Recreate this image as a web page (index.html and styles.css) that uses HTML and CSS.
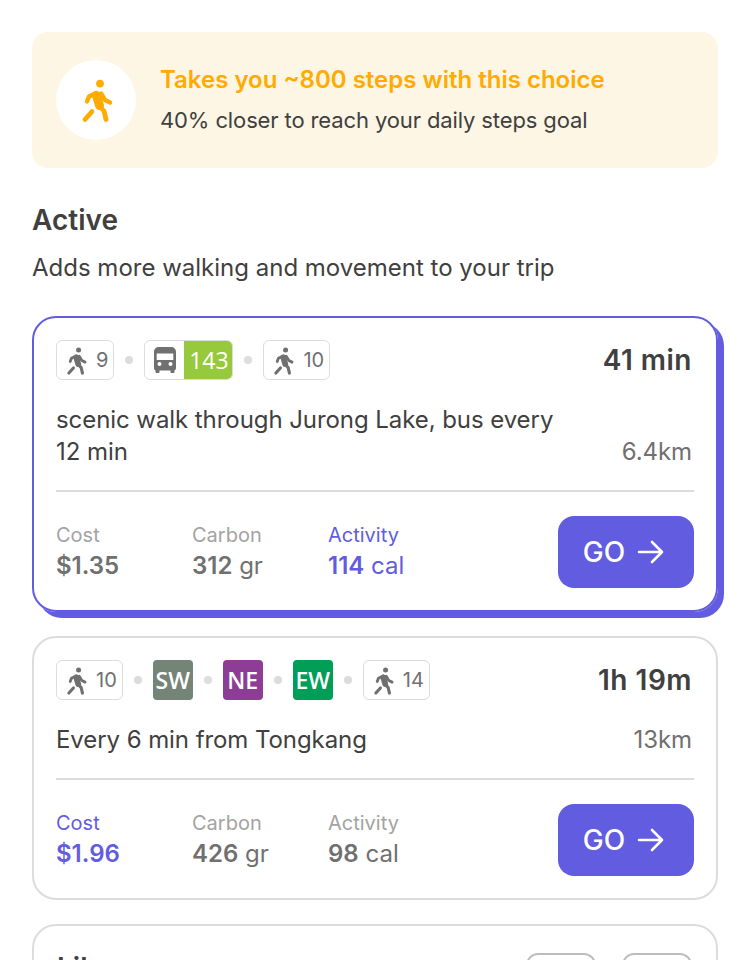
FILE: index.html
```html
<!DOCTYPE html>
<html lang="en">
<head>
    <meta charset="UTF-8">
    <meta name="viewport" content="width=device-width, initial-scale=1.0">
    <title>Active routes</title>
    <link rel="stylesheet" href="styles.css">
</head>
<body>
    <svg class="defs" width="0" height="0">
        <symbol id="walk" viewBox="0 0 34 48">
            <circle cx="21" cy="7.600" r="3.900" fill="currentColor"/>
            <g fill="none" stroke="currentColor" stroke-linecap="round" stroke-linejoin="round">
                <path d="M17.500 19.500 20.500 29.500" stroke-width="9"/>
                <path d="M17 17 10 20.500 8 25.500" stroke-width="4.400"/>
                <path d="M22 17.500 26 24 31 26.500" stroke-width="4.400"/>
                <path d="M20.500 30 25 35 27 43.500" stroke-width="4.800"/>
                <path d="M13 35.500 6 43.500" stroke-width="4.800"/>
            </g>
        </symbol>
        <symbol id="bus" viewBox="0 0 22 26">
            <path d="M5 0h12c3 0 5 2 5 5v16c0 1-.5 2-1.500 2.300V25c0 .6-.4 1-1 1h-2c-.6 0-1-.4-1-1v-1.500H5.500V25c0 .6-.4 1-1 1h-2c-.6 0-1-.4-1-1v-1.700C.5 23 0 22 0 21V5c0-3 2-5 5-5z" fill="currentColor"/>
            <rect x="2.700" y="6.500" width="16.600" height="6.500" fill="#fff"/>
            <circle cx="5.500" cy="17" r="2" fill="#fff"/>
            <circle cx="16.500" cy="17" r="2" fill="#fff"/>
        </symbol>
        <symbol id="arrow" viewBox="0 0 28 28">
            <path d="M2 14h23M15 4l10 10-10 10" fill="none" stroke="currentColor" stroke-width="2.600" stroke-linecap="round" stroke-linejoin="round"/>
        </symbol>
    </svg>

    <div class="container">
        <div class="banner">
            <div class="banner-icon"><svg class="icon-lg"><use href="#walk"/></svg></div>
            <div>
                <div class="banner-title">Takes you ~800 steps with this choice</div>
                <div class="banner-sub">40% closer to reach your daily steps goal</div>
            </div>
        </div>

        <h2>Active</h2>
        <p class="lead">Adds more walking and movement to your trip</p>

        <div class="card card-selected">
            <div class="card-top">
                <div class="legs">
                    <span class="chip"><svg class="icon"><use href="#walk"/></svg>9</span>
                    <i class="dot"></i>
                    <span class="chip chip-bus"><span class="bus-part"><svg class="icon-bus"><use href="#bus"/></svg></span><span class="bus-no">143</span></span>
                    <i class="dot"></i>
                    <span class="chip"><svg class="icon"><use href="#walk"/></svg>10</span>
                </div>
                <div class="duration">41 min</div>
            </div>
            <div class="desc">
                <div class="desc-text">scenic walk through Jurong Lake, bus every 12 min</div>
                <div class="distance">6.4km</div>
            </div>
            <div class="card-bottom">
                <div class="stat">
                    <div class="stat-label">Cost</div>
                    <div class="stat-value"><b>$1.35</b></div>
                </div>
                <div class="stat">
                    <div class="stat-label">Carbon</div>
                    <div class="stat-value"><b>312</b> gr</div>
                </div>
                <div class="stat stat-on">
                    <div class="stat-label">Activity</div>
                    <div class="stat-value"><b>114</b> cal</div>
                </div>
                <button class="go">GO<svg class="icon-arrow"><use href="#arrow"/></svg></button>
            </div>
        </div>

        <div class="card">
            <div class="card-top">
                <div class="legs">
                    <span class="chip"><svg class="icon"><use href="#walk"/></svg>10</span>
                    <i class="dot"></i>
                    <span class="line line-sw">SW</span>
                    <i class="dot"></i>
                    <span class="line line-ne">NE</span>
                    <i class="dot"></i>
                    <span class="line line-ew">EW</span>
                    <i class="dot"></i>
                    <span class="chip"><svg class="icon"><use href="#walk"/></svg>14</span>
                </div>
                <div class="duration">1h 19m</div>
            </div>
            <div class="desc">
                <div class="desc-text">Every 6 min from Tongkang</div>
                <div class="distance">13km</div>
            </div>
            <div class="card-bottom">
                <div class="stat stat-on">
                    <div class="stat-label">Cost</div>
                    <div class="stat-value"><b>$1.96</b></div>
                </div>
                <div class="stat">
                    <div class="stat-label">Carbon</div>
                    <div class="stat-value"><b>426</b> gr</div>
                </div>
                <div class="stat">
                    <div class="stat-label">Activity</div>
                    <div class="stat-value"><b>98</b> cal</div>
                </div>
                <button class="go">GO<svg class="icon-arrow"><use href="#arrow"/></svg></button>
            </div>
        </div>

        <div class="card card-cut">
            <div class="cut-title">Lik</div>
            <div class="cut-pills"><span></span><span></span></div>
        </div>
    </div>
</body>
</html>
```

FILE: styles.css
```css
html, body {
    height: 960px;
    overflow: hidden;
}
body {
    font-family: Inter, sans-serif;
    margin: 0;
    padding: 0;
    color: #404040;
    background: #fff;
}
.defs {
    position: absolute;
}
.container {
    padding: 32px 32px 0;
}
.banner {
    display: flex;
    align-items: center;
    gap: 24px;
    height: 136px;
    padding: 0 24px;
    box-sizing: border-box;
    border-radius: 16px;
    background-color: #fef6e4;
}
.banner-icon {
    display: flex;
    align-items: center;
    justify-content: center;
    width: 80px;
    height: 80px;
    border-radius: 50%;
    background: #fff;
    color: #ffab00;
}
.icon-lg {
    width: 34px;
    height: 48px;
}
.banner-title {
    font-size: 24px;
    line-height: 32px;
    font-weight: 600;
    color: #ffab00;
}
.banner-sub {
    font-size: 22px;
    line-height: 32px;
    letter-spacing: -0.12px;
    margin-top: 8px;
}
h2 {
    margin: 36px 0 0;
    font-size: 28px;
    line-height: 32px;
    font-weight: 600;
}
.lead {
    margin: 16px 0 0;
    font-size: 24px;
    line-height: 32px;
}
.card {
    box-sizing: border-box;
    width: 686px;
    margin-top: 24px;
    padding: 22px 24px 22px 22px;
    border: 2px solid #dcdcdc;
    border-radius: 24px;
}
.card-selected {
    margin-top: 32px;
    border-color: #625ce0;
    box-shadow: 6px 6px 0 #625ce0;
}
.card-top {
    display: flex;
    justify-content: space-between;
    align-items: center;
}
.legs {
    display: flex;
    align-items: center;
    gap: 11px;
}
.dot {
    width: 8px;
    height: 8px;
    border-radius: 50%;
    background: #dcdcdc;
}
.chip {
    display: flex;
    align-items: center;
    box-sizing: border-box;
    height: 40px;
    padding: 0 5px 0 8px;
    border: 1px solid #dcdcdc;
    border-radius: 6px;
    font-size: 20px;
    color: #707070;
}
.icon {
    width: 22px;
    height: 31px;
    margin-right: 9px;
    color: #707070;
}
.chip-bus {
    padding: 0;
    overflow: hidden;
}
.bus-part {
    display: flex;
    align-items: center;
    justify-content: center;
    width: 39px;
    color: #707070;
}
.icon-bus {
    width: 22px;
    height: 26px;
}
.bus-no, .line {
    display: flex;
    align-items: center;
    justify-content: center;
    height: 40px;
    color: #fff;
    font-family: "Open Sans", sans-serif;
    font-size: 23px;
    font-weight: 600;
}
.bus-no {
    width: 49px;
    margin: -1px -1px -1px 0;
    background: #97c93c;
    font-weight: 500;
}
.line {
    width: 40px;
    border-radius: 4px;
}
.line-sw {
    background: #748477;
}
.line-ne {
    background: #8e3d97;
}
.line-ew {
    background: #009e57;
}
.duration {
    font-size: 28px;
    font-weight: 600;
    letter-spacing: 0.5px;
}
.desc {
    display: flex;
    justify-content: space-between;
    align-items: flex-end;
    margin-top: 24px;
    font-size: 24px;
    line-height: 32px;
    letter-spacing: -0.07px;
}
.desc-text {
    width: 520px;
}
.distance {
    color: #707070;
}
.card-bottom {
    display: flex;
    align-items: center;
    margin-top: 22px;
    margin-right: -2px;
    padding-top: 24px;
    border-top: 2px solid #dcdcdc;
}
.stat {
    width: 136px;
    padding-bottom: 1px;
}
.stat-label {
    font-size: 20px;
    line-height: 29px;
    color: #a3a3a3;
}
.stat-value {
    font-size: 24px;
    line-height: 32px;
    color: #707070;
}
.stat-value b {
    font-weight: 600;
}
.stat-on .stat-label, .stat-on .stat-value {
    color: #625ce0;
}
.go {
    display: flex;
    align-items: center;
    justify-content: center;
    gap: 12px;
    width: 136px;
    height: 72px;
    margin-left: auto;
    padding: 0 4px 0 0;
    border: none;
    border-radius: 16px;
    background-color: #625ce0;
    color: #fff;
    font-family: Inter, sans-serif;
    font-size: 28px;
    font-weight: 500;
    cursor: pointer;
}
.icon-arrow {
    width: 28px;
    height: 28px;
}
.card-cut {
    display: flex;
    justify-content: space-between;
    height: 120px;
    padding: 27px 24px 0 23px;
}
.cut-title {
    font-size: 28px;
    line-height: 30px;
    font-weight: 600;
}
.cut-pills {
    display: flex;
    gap: 26px;
}
.cut-pills span {
    box-sizing: border-box;
    width: 70px;
    height: 40px;
    border: 2px solid #bdbdbd;
    border-radius: 12px;
}
```
